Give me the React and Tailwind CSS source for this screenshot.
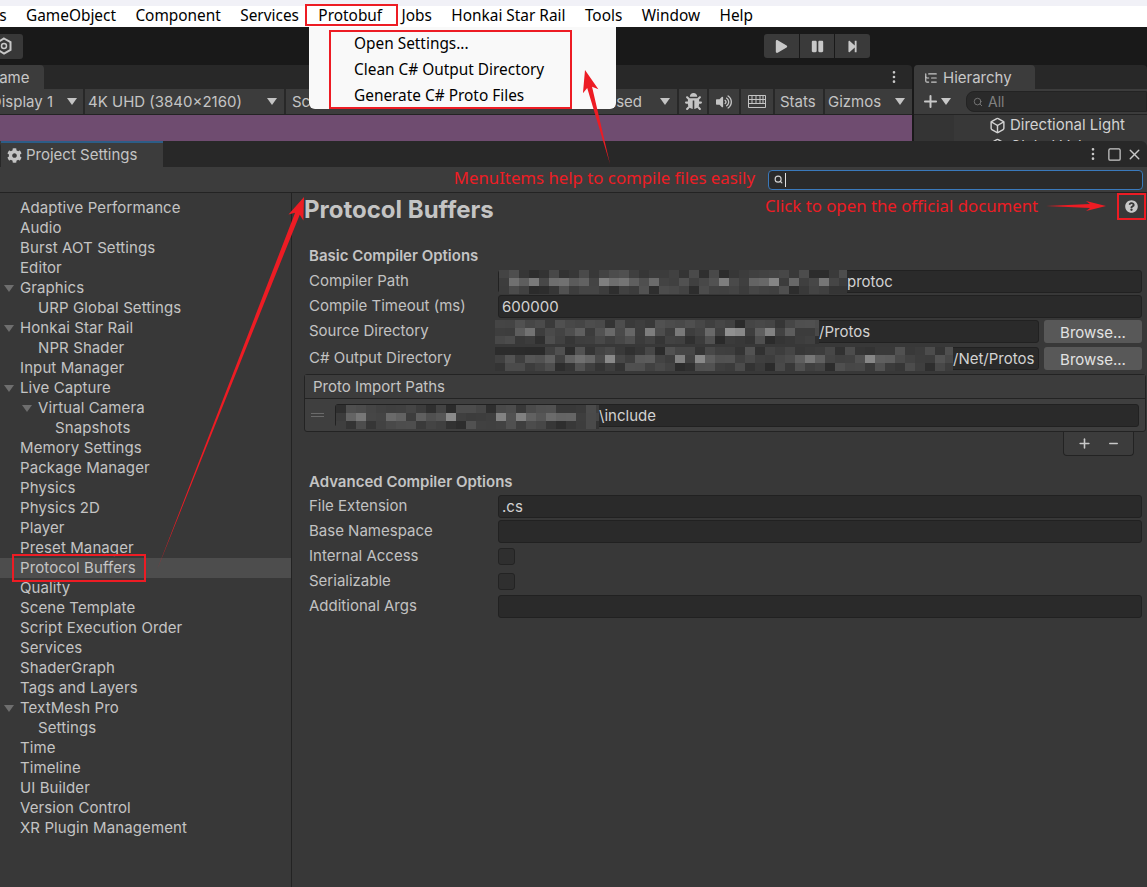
import { Box, ListTree, Plus, X, Minus, EllipsisVertical, Search, Square } from "lucide-react";
import { FaBug, FaCog, FaQuestionCircle, FaPlay, FaPause, FaStepForward, FaVolumeUp } from "react-icons/fa";

const menuItems = ["GameObject", "Component", "Services", "Protobuf", "Jobs", "Honkai Star Rail", "Tools", "Window", "Help"];

const sidebarItems = [
  { label: "Adaptive Performance" },
  { label: "Audio" },
  { label: "Burst AOT Settings" },
  { label: "Editor" },
  { label: "Graphics", open: true },
  { label: "URP Global Settings", depth: 1 },
  { label: "Honkai Star Rail", open: true },
  { label: "NPR Shader", depth: 1 },
  { label: "Input Manager" },
  { label: "Live Capture", open: true },
  { label: "Virtual Camera", depth: 1, open: true },
  { label: "Snapshots", depth: 2 },
  { label: "Memory Settings" },
  { label: "Package Manager" },
  { label: "Physics" },
  { label: "Physics 2D" },
  { label: "Player" },
  { label: "Preset Manager" },
  { label: "Protocol Buffers", selected: true },
  { label: "Quality" },
  { label: "Scene Template" },
  { label: "Script Execution Order" },
  { label: "Services" },
  { label: "ShaderGraph" },
  { label: "Tags and Layers" },
  { label: "TextMesh Pro", open: true },
  { label: "Settings", depth: 1 },
  { label: "Time" },
  { label: "Timeline" },
  { label: "UI Builder" },
  { label: "Version Control" },
  { label: "XR Plugin Management" },
];

const inter = { fontFamily: "Inter, sans-serif" };
const noto = { fontFamily: "'Noto Sans', sans-serif" };

const Caret = ({ className = "" }) => (
  <svg width="10" height="7" viewBox="0 0 10 7" className={className}>
    <path d="M0 0h10L5 7z" fill="currentColor" />
  </svg>
);

const Mosaic = ({ width, seed, className = "" }) => {
  const rects = [];
  let n = seed;
  for (let row = 0; row < 3; row++) {
    for (let col = 0; col * 10 < width; col++) {
      n = (n * 9301 + 49297) % 233280;
      const r = n / 233280;
      const v = Math.round(row === 1 ? 60 + r * r * 85 : 42 + r * 40);
      rects.push(<rect key={`${row}-${col}`} x={col * 10} y={row * 8} width="10" height="8" fill={`rgb(${v},${v},${v})`} />);
    }
  }
  return (
    <svg width={width} height="24" className={`shrink-0 -my-[1px] ${className}`}>
      {rects}
    </svg>
  );
};

const Field = ({ children, className = "" }) => (
  <div className={`flex h-[23px] items-center rounded-[3px] border border-[#212121] bg-[#2a2a2a] pt-[1px] text-[15px] text-[#d2d2d2] ${className}`}>
    {children}
  </div>
);

const Row = ({ label, children, className = "" }) => (
  <div className={`flex items-center ${className}`}>
    <span className="w-[194px] shrink-0 pl-[5px] text-[15px] text-[#c2c2c2]">{label}</span>
    {children}
  </div>
);

const Browse = () => (
  <button className="ml-[5px] h-[23px] w-[98px] shrink-0 rounded-[3px] bg-[#585858] pt-[2px] text-center text-[15px] text-[#e2e2e2]">
    Browse...
  </button>
);

const Check = () => <div className="h-[17px] w-[17px] rounded-[3px] border border-[#232323] bg-[#2f2f2f]" />;

const Arrow = ({ from, to, width = 5, head = 22, spread = 8 }) => {
  const dx = to[0] - from[0];
  const dy = to[1] - from[1];
  const len = Math.hypot(dx, dy);
  const ux = dx / len;
  const uy = dy / len;
  const at = (along, side) => `${to[0] - ux * along - uy * side},${to[1] - uy * along + ux * side}`;
  const points = [
    `${from[0]},${from[1]}`,
    at(head - 4, width / 2),
    at(head, spread),
    `${to[0]},${to[1]}`,
    at(head, -spread),
    at(head - 4, -width / 2),
  ].join(" ");
  return <polygon points={points} fill="#ed1c24" />;
};

const TitleTab = ({ children, className = "" }) => (
  <div className={`flex h-full items-center rounded-t-[4px] bg-[#3c3c3c] pt-[2px] text-[15px] text-[#c8c8c8] ${className}`}>{children}</div>
);

const Sep = () => <div className="h-full w-[2px] shrink-0 bg-[#282828]" />;

export default function App() {
  return (
    <div className="relative flex h-[887px] w-[1147px] flex-col overflow-hidden bg-[#383838]" style={inter}>
      {/* menu bar */}
      <div className="h-[6px] bg-[#f1f1f7]" />
      <div className="flex h-[21px] items-center gap-[19.400px] bg-white pb-[2px] text-[15.400px] leading-none text-black" style={noto}>
        <span className="flex w-[6.600px] shrink-0 justify-end overflow-visible whitespace-nowrap">Assets</span>
        {menuItems.map((item) => (
          <span key={item} className="whitespace-nowrap">
            {item}
          </span>
        ))}
      </div>

      {/* play toolbar */}
      <div className="relative flex h-[38px] items-center justify-center bg-[#191919]">
        <div className="absolute left-0 flex h-[25px] w-[23px] items-center justify-center rounded-r-[3px] bg-[#383838]">
          <svg width="16" height="18" viewBox="0 0 16 18" className="-ml-[16px] text-[#c8c8c8]">
            <path d="M8 1.500l6.500 3.700v7.600L8 16.500l-6.500-3.700V5.200z" fill="none" stroke="currentColor" strokeWidth="2" />
            <circle cx="8" cy="9" r="2.500" fill="none" stroke="currentColor" strokeWidth="1.500" />
          </svg>
        </div>
        <div className="ml-[487px] flex h-[24px] w-[106px] gap-[1px] text-[#c8c8c8]">
          <div className="flex flex-1 items-center justify-center rounded-l-[3px] bg-[#3a3a3a]">
            <FaPlay size={13} />
          </div>
          <div className="flex flex-1 items-center justify-center bg-[#3a3a3a]">
            <FaPause size={13} />
          </div>
          <div className="flex flex-1 items-center justify-center rounded-r-[3px] bg-[#3a3a3a]">
            <FaStepForward size={13} />
          </div>
        </div>
      </div>

      {/* game and hierarchy panels, mostly covered by the settings window */}
      <div className="flex h-[76px] overflow-hidden bg-[#191919]">
        <div className="flex w-[912px] shrink-0 flex-col">
          <div className="flex h-[24px] shrink-0 items-center justify-between rounded-tr-[4px] bg-[#282828] pr-[10px]">
            <TitleTab className="w-[44px] overflow-hidden rounded-tl-none">
              <span className="-ml-[12px] whitespace-nowrap">Game</span>
            </TitleTab>
            <EllipsisVertical size={16} className="text-[#c8c8c8]" />
          </div>
          <div className="flex h-[26px] shrink-0 items-center border-b border-[#232323] bg-[#3c3c3c] text-[15px] text-[#c4c4c4]">
            <div className="flex h-full w-[83px] shrink-0 items-center justify-end overflow-hidden pr-[6px]">
              <span className="whitespace-nowrap pt-[2px]">Display 1</span>
              <Caret className="ml-[14px] shrink-0" />
            </div>
            <Sep />
            <div className="flex h-full w-[199px] shrink-0 items-center justify-between pl-[3px] pr-[7px]">
              <span className="whitespace-nowrap pt-[2px]">4K UHD (3840x2160)</span>
              <Caret />
            </div>
            <Sep />
            <div className="flex h-full flex-1 items-center justify-between pl-[6px] pr-[7px]">
              <span className="pt-[2px]">Scale</span>
              <span className="flex items-center gap-[18px]">
                <span className="pt-[2px]">Focused</span>
                <Caret />
              </span>
            </div>
            <Sep />
            <div className="flex h-full w-[28px] shrink-0 items-center justify-center">
              <FaBug size={17} />
            </div>
            <Sep />
            <div className="flex h-full w-[30px] shrink-0 items-center justify-center">
              <FaVolumeUp size={16} />
            </div>
            <Sep />
            <div className="flex h-full w-[32px] shrink-0 items-center justify-center">
              <svg width="18" height="13" viewBox="0 0 18 13" fill="none" stroke="currentColor">
                <path d="M.5.500h17v12H.500zM.5 4.500h17M.5 8.500h17M4 .5v8M8 .5v8M12 .5v8M15 .5v8" />
              </svg>
            </div>
            <Sep />
            <span className="w-[48px] shrink-0 pl-[5px] pt-[2px]">Stats</span>
            <Sep />
            <span className="w-[63px] shrink-0 pl-[3px] pt-[2px]">Gizmos</span>
            <div className="flex w-[24px] shrink-0 justify-center">
              <Caret />
            </div>
          </div>
          <div className="h-[26px] shrink-0 bg-[#6f4c70]" />
        </div>
        <div className="ml-[2px] flex min-w-0 flex-1 flex-col">
          <div className="flex h-[24px] shrink-0 rounded-t-[4px] bg-[#282828]">
            <TitleTab className="w-[121px] gap-[5px] pl-[10px]">
              <ListTree size={14} />
              <span>Hierarchy</span>
            </TitleTab>
          </div>
          <div className="flex h-[26px] shrink-0 items-center border-b border-[#232323] bg-[#3c3c3c] pl-[7px] text-[#c8c8c8]">
            <Plus size={19} strokeWidth={2.5} />
            <Caret className="ml-[1px]" />
            <div className="ml-[15px] flex h-[21px] flex-1 items-center gap-[5px] rounded-l-[8px] border border-[#232323] bg-[#2a2a2a] pl-[6px] text-[14px] text-[#808080]">
              <Search size={10} />
              <span>All</span>
            </div>
          </div>
          <div className="flex min-h-0 flex-1 overflow-hidden bg-[#383838]">
            <div className="w-[40px] shrink-0 bg-[#343434]" />
            <div className="flex flex-col gap-[1px] pl-[35px] text-[15px] text-[#d2d2d2]">
              <div className="flex h-[20px] shrink-0 items-center gap-[4px] whitespace-nowrap">
                <Box size={17} />
                <span>Directional Light</span>
              </div>
              <div className="flex h-[20px] shrink-0 items-center gap-[4px] whitespace-nowrap">
                <Box size={17} />
                <span>Global Volume</span>
              </div>
            </div>
          </div>
        </div>
      </div>

      {/* project settings window */}
      <div className="flex min-h-0 flex-1 flex-col">
        <div className="flex h-[26px] items-stretch justify-between rounded-t-[6px] bg-[#282828] pr-[4px]">
          <div className="ml-[1px] flex w-[162px] items-center gap-[4px] whitespace-nowrap border-t-2 border-[#2c5d87] bg-[#3c3c3c] pl-[6px] text-[15px] text-[#c4c4c4]">
            <FaCog size={15} className="shrink-0" />
            <span>Project Settings</span>
          </div>
          <div className="flex items-center text-[#c8c8c8]">
            <EllipsisVertical size={16} />
            <Square size={15} strokeWidth={2} className="ml-[6px]" />
            <X size={17} className="ml-[4px]" />
          </div>
        </div>
        <div className="flex h-[26px] items-center justify-end border-b border-[#232323] bg-[#3c3c3c] pr-[4px]">
          <span className="mr-[13px] -mt-[3px] whitespace-nowrap text-[16.800px] leading-none text-[#ed1c24]" style={noto}>
            MenuItems help to compile files easily
          </span>
          <div className="flex h-[20px] w-[375px] items-center rounded-[4px] border border-[#3a79bb] bg-[#2a2a2a] pl-[5px] text-[#d2d2d2]">
            <Search size={9} strokeWidth={3} />
            <div className="ml-[2px] h-[14px] w-[1px] bg-[#e0e0e0]" />
          </div>
        </div>

        <div className="flex min-h-0 flex-1">
          {/* sidebar */}
          <div className="w-[292px] shrink-0 border-r border-[#232323] pt-[5px] tracking-[0.1px]">
            {sidebarItems.map((item) => (
              <div
                key={item.label}
                className={`relative flex h-[20px] items-center text-[15px] text-[#c4c4c4] ${item.selected ? "bg-[#4d4d4d]" : ""} ${
                  item.depth === 1 ? "pl-[38px]" : item.depth === 2 ? "pl-[55px]" : "pl-[20px]"
                }`}
              >
                {item.open && (
                  <Caret className={`absolute top-[7px] text-[#6e6e6e] ${item.depth === 1 ? "left-[22px]" : "left-[4px]"}`} />
                )}
                {item.label}
              </div>
            ))}
          </div>

          {/* content */}
          <div className="min-w-0 flex-1 pl-[12px] pr-[2px]">
            <h1 className="mt-[2px] h-[30px] text-[24px] leading-[30px] font-bold text-[#c4c4c4]">Protocol Buffers</h1>
            <div className="h-[19px]" />
            <div className="pr-[3px]">
              <div className="flex h-[24px] items-center pl-[5px] text-[15px] font-semibold text-[#c4c4c4]">Basic Compiler Options</div>
              <div className="mt-[2px] flex flex-col gap-[2px]">
                <Row label="Compiler Path">
                  <Field className="flex-1">
                    <Mosaic width={348} seed={11} />
                    <span>protoc</span>
                  </Field>
                </Row>
                <Row label="Compile Timeout (ms)">
                  <Field className="flex-1 pl-[3px]">600000</Field>
                </Row>
                <Row label="Source Directory">
                  <Field className="flex-1">
                    <Mosaic width={324} seed={37} className="-ml-[4px]" />
                    <span>/Protos</span>
                  </Field>
                  <Browse />
                </Row>
                <Row label="C# Output Directory" className="mt-[2px]">
                  <Field className="flex-1">
                    <Mosaic width={458} seed={71} className="-ml-[4px]" />
                    <span className="whitespace-nowrap">/Net/Protos</span>
                  </Field>
                  <Browse />
                </Row>
              </div>
            </div>

            {/* proto import paths */}
            <div className="mt-[4px] -mr-[1px] rounded-[3px] border border-[#232323] bg-[#3f3f3f]">
              <div className="flex h-[24px] items-center border-b border-[#232323] bg-[#3c3c3c] pl-[8px] pt-[2px] text-[15px] text-[#c4c4c4]">
                Proto Import Paths
              </div>
              <div className="flex h-[32px] items-center px-[6px]">
                <div className="mr-[11px] h-[4px] w-[13px] shrink-0 border-y border-[#6a6a6a]" />
                <Field className="flex-1 pt-[3px]">
                  <Mosaic width={263} seed={23} />
                  <span>\include</span>
                </Field>
              </div>
            </div>
            <div className="flex justify-end pr-[11px]">
              <div className="flex h-[24px] w-[71px] items-center justify-center gap-[15px] rounded-b-[4px] border border-t-0 border-[#232323] bg-[#3c3c3c] text-[#c8c8c8]">
                <Plus size={15} strokeWidth={2.5} />
                <Minus size={13} strokeWidth={2.5} />
              </div>
            </div>

            <div className="pr-[3px]">
              <div className="mt-[14px] flex h-[24px] items-center pl-[5px] text-[15px] font-semibold text-[#c4c4c4]">
                Advanced Compiler Options
              </div>
              <div className="mt-[1px] flex flex-col gap-[2px]">
                <Row label="File Extension">
                  <Field className="flex-1 pl-[3px]">.cs</Field>
                </Row>
                <Row label="Base Namespace">
                  <Field className="flex-1" />
                </Row>
                <Row label="Internal Access" className="h-[23px]">
                  <Check />
                </Row>
                <Row label="Serializable" className="h-[23px]">
                  <Check />
                </Row>
                <Row label="Additional Args">
                  <Field className="flex-1" />
                </Row>
              </div>
            </div>
          </div>
        </div>
      </div>

      {/* protobuf dropdown */}
      <div
        className="absolute left-[309px] top-[27px] flex h-[82px] w-[307px] flex-col rounded-b-[6px] bg-[#f9f9f9] pl-[45px] pt-[4px] text-[15.400px] text-black"
        style={noto}
      >
        <span className="flex h-[26px] items-center">Open Settings...</span>
        <span className="flex h-[26px] items-center">Clean C# Output Directory</span>
        <span className="flex h-[26px] items-center">Generate C# Proto Files</span>
      </div>

      {/* red annotations */}
      <div className="absolute left-[305px] top-[4px] h-[22px] w-[93px] border-2 border-[#ed1c24]" />
      <div className="absolute left-[329px] top-[30px] h-[79px] w-[243px] border-2 border-[#ed1c24]" />
      <div className="absolute left-[12px] top-[554px] h-[28px] w-[134px] border-2 border-[#ed1c24]" />
      <div className="absolute left-[1117px] top-[193px] flex h-[27px] w-[29px] items-center justify-center border-2 border-[#ed1c24] text-[#c8c8c8]">
        <FaQuestionCircle size={13} />
      </div>
      <span className="absolute left-[765px] top-[195px] whitespace-nowrap text-[16.800px] leading-[22px] text-[#ed1c24]" style={noto}>
        Click to open the official document
      </span>
      <svg width="1147" height="887" className="pointer-events-none absolute left-0 top-0">
        <Arrow from={[610, 164]} to={[585, 70]} />
        <Arrow from={[157, 570]} to={[304, 197]} />
        <Arrow from={[1046, 206]} to={[1106, 206]} width={4} head={20} spread={5} />
      </svg>
    </div>
  );
}
